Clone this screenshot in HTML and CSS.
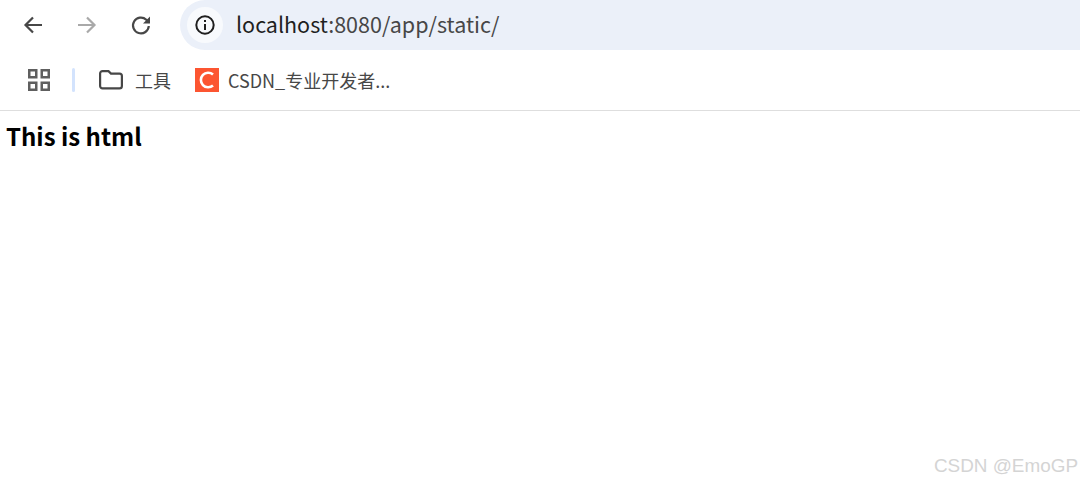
FILE: index.html
```html
<!DOCTYPE html>
<html lang="zh-CN">
<head>
    <meta charset="UTF-8">
    <title>localhost:8080/app/static/</title>
    <link rel="stylesheet" href="styles.css">
</head>
<body>
    <div class="toolbar">
        <button class="nav-btn">
            <svg width="24" height="24" viewBox="0 0 24 24" fill="none" stroke="#474747" stroke-width="2.2"><path d="M21 12H4.5M12 4.5L4.5 12l7.5 7.5"/></svg>
        </button>
        <button class="nav-btn">
            <svg width="24" height="24" viewBox="0 0 24 24" fill="none" stroke="#a9a9a9" stroke-width="2.2"><path d="M3 12h16.5M12 4.5l7.5 7.5-7.5 7.5"/></svg>
        </button>
        <button class="nav-btn">
            <svg width="24" height="24" viewBox="0 0 24 24" fill="none"><path d="M19.8 13a7.9 7.9 0 1 1-2.5-6.3L20 9.5" stroke="#474747" stroke-width="2.2"/><path d="M21 3.5V10.500H14z" fill="#474747"/></svg>
        </button>
        <div class="address">
            <span class="info-badge">
                <svg width="22" height="22" viewBox="0 0 22 22" fill="none"><circle cx="11" cy="11" r="8.7" stroke="#1f1f1f" stroke-width="2"/><rect x="10" y="10" width="2" height="6" fill="#1f1f1f"/><rect x="10" y="6" width="2" height="2" fill="#1f1f1f"/></svg>
            </span>
            <span class="url"><span class="host">localhost</span>:8080/app/static/</span>
        </div>
    </div>
    <div class="bookmarks">
        <svg class="apps" width="22" height="22" viewBox="0 0 22 22" fill="none" stroke="#5f5f5f" stroke-width="2.5"><rect x="1.25" y="1.25" width="7" height="7"/><rect x="13.75" y="1.25" width="7" height="7"/><rect x="1.25" y="13.75" width="7" height="7"/><rect x="13.75" y="13.75" width="7" height="7"/></svg>
        <span class="divider"></span>
        <div class="bookmark folder">
            <svg width="24" height="20" viewBox="0 0 24 20" fill="none" stroke="#474747" stroke-width="2.2"><path d="M1.1 3.5a2.4 2.4 0 0 1 2.4-2.4h6l2.5 2.5h8.500a2.4 2.4 0 0 1 2.4 2.4v10a2.4 2.4 0 0 1-2.4 2.4h-17a2.4 2.4 0 0 1-2.4-2.4z"/></svg>
            <span>工具</span>
        </div>
        <div class="bookmark">
            <span class="favicon">
                <svg width="24" height="24" viewBox="0 0 24 24" fill="none"><path d="M18 6.5A7.3 7.3 0 1 0 18 17.5" stroke="#fff" stroke-width="2.6"/></svg>
            </span>
            <span>CSDN_专业开发者...</span>
        </div>
    </div>
    <div class="page">
        <h3>This is html</h3>
    </div>
    <div class="watermark">CSDN @EmoGP</div>
</body>
</html>
```

FILE: styles.css
```css
html, body {
    height: 100%;
}

body {
    margin: 0;
    background-color: white;
    font-family: "Noto Sans CJK SC", "Noto Sans", sans-serif;
    overflow: hidden;
}

.toolbar {
    display: flex;
    align-items: center;
    height: 50px;
    padding-left: 15px;
}

.nav-btn {
    display: flex;
    align-items: center;
    justify-content: center;
    width: 36px;
    height: 36px;
    margin-right: 18px;
    padding: 0;
    border: none;
    background: none;
}

.address {
    display: flex;
    align-items: center;
    flex: 1;
    height: 50px;
    margin-left: 3px;
    padding-left: 7px;
    background-color: #ebf0f9;
    border-radius: 25px 0 0 25px;
}

.info-badge {
    display: flex;
    align-items: center;
    justify-content: center;
    width: 36px;
    height: 36px;
    border-radius: 50%;
    background-color: #f8fafd;
}

.url {
    margin-left: 13px;
    margin-bottom: 4px;
    font-size: 21.5px;
    color: #474747;
}

.host {
    color: #1f1f1f;
}

.bookmarks {
    display: flex;
    align-items: center;
    height: 60px;
    border-bottom: 1px solid #dedede;
    font-size: 18px;
    color: #474747;
}

.apps {
    margin-left: 28px;
}

.divider {
    width: 3px;
    height: 24px;
    margin: 0 24px 0 22px;
    background-color: #d3e3fd;
    border-radius: 2px;
}

.bookmark {
    display: flex;
    align-items: center;
    gap: 9px;
}

.folder {
    gap: 12px;
    margin-right: 24px;
}

.favicon {
    display: flex;
    width: 24px;
    height: 24px;
    background-color: #fc5531;
}

.page {
    padding: 9px 6px;
}

h3 {
    margin: 0;
    font-size: 24px;
    line-height: 32px;
    font-weight: bold;
    color: black;
}

.watermark {
    position: absolute;
    right: 2px;
    bottom: 6px;
    font-family: "Liberation Sans", sans-serif;
    font-size: 18.9px;
    color: #d4d4d4;
}
```
